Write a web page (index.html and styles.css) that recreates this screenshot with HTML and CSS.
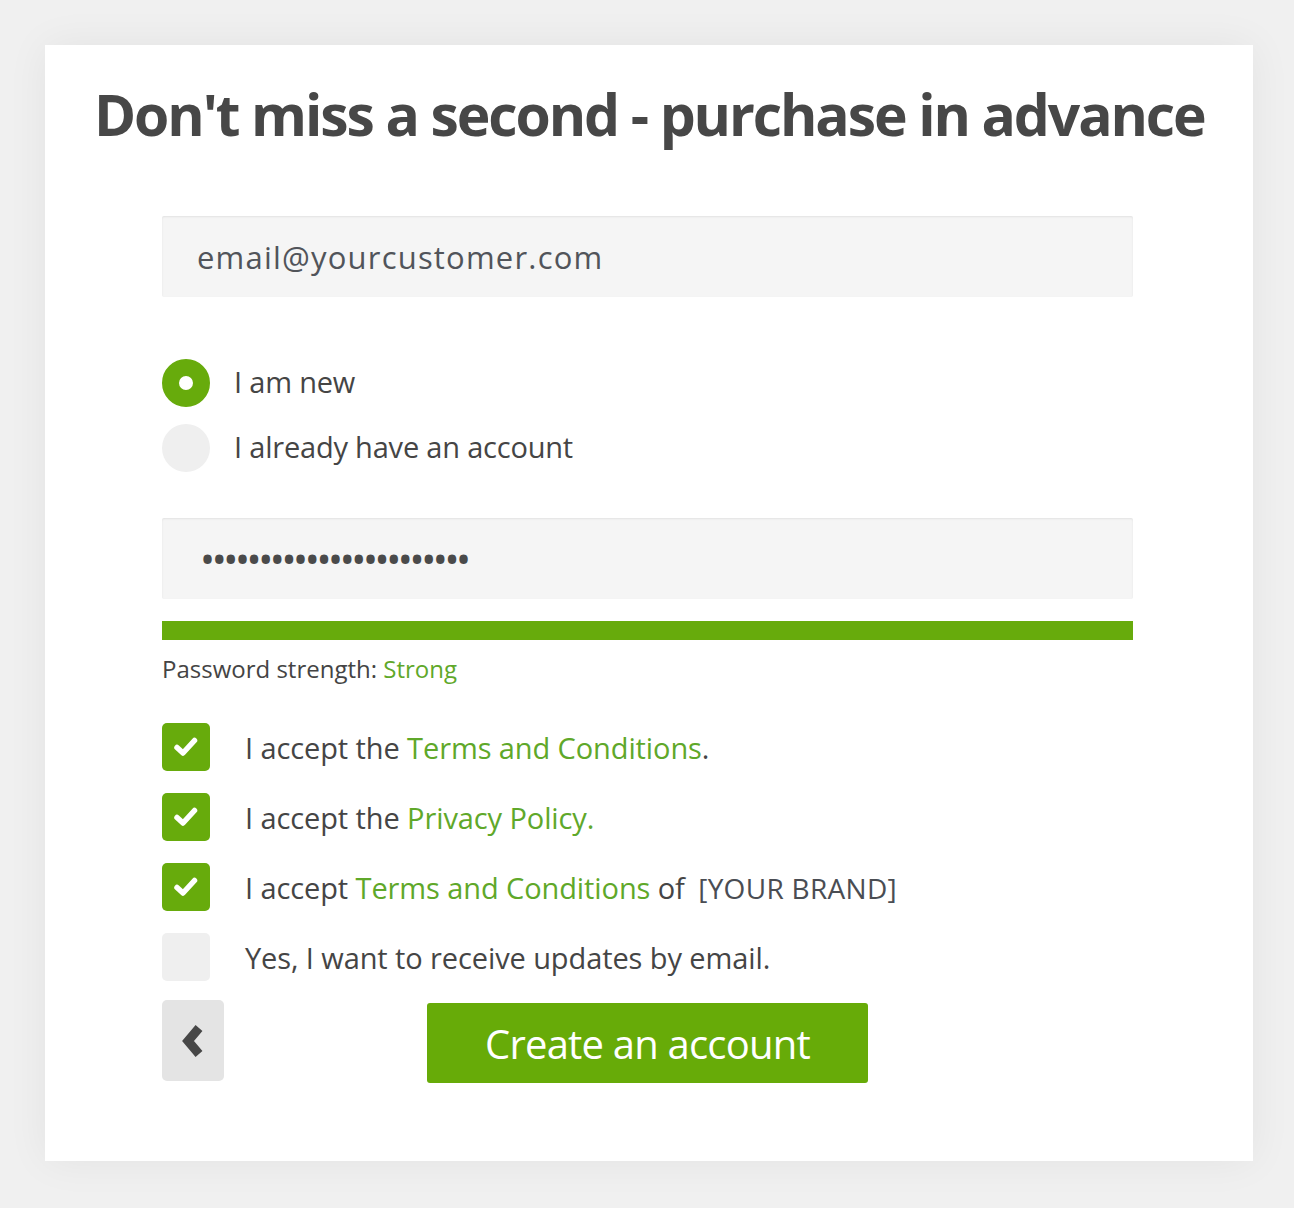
FILE: index.html
```html
<!DOCTYPE html>
<html>
<head>
<meta charset="utf-8">
<link rel="stylesheet" href="styles.css">
</head>
<body>
<div class="card">
  <h1 class="title">Don't miss a second - purchase in advance</h1>
  <div class="form">
    <div class="field email">email@yourcustomer.com</div>
    <div class="radios">
      <div class="radio-row"><span class="radio on"></span><span class="label">I am new</span></div>
      <div class="radio-row"><span class="radio"></span><span class="label">I already have an account</span></div>
    </div>
    <div class="field pass"><span class="dots">•••••••••••••••••••••••</span></div>
    <div class="strength-bar"></div>
    <div class="strength">Password strength: <span class="green">Strong</span></div>
    <div class="checks">
      <div class="check-row"><span class="box on"><svg viewBox="0 0 26 26" width="26" height="26"><path d="M4 13.5 L10 19 L21.5 6.5" fill="none" stroke="#fff" stroke-width="5.5" stroke-linecap="round" stroke-linejoin="round"/></svg></span><span class="clabel">I accept the <span class="green">Terms and Conditions</span>.</span></div>
      <div class="check-row"><span class="box on"><svg viewBox="0 0 26 26" width="26" height="26"><path d="M4 13.5 L10 19 L21.5 6.5" fill="none" stroke="#fff" stroke-width="5.5" stroke-linecap="round" stroke-linejoin="round"/></svg></span><span class="clabel">I accept the <span class="green">Privacy Policy.</span></span></div>
      <div class="check-row"><span class="box on"><svg viewBox="0 0 26 26" width="26" height="26"><path d="M4 13.5 L10 19 L21.5 6.5" fill="none" stroke="#fff" stroke-width="5.5" stroke-linecap="round" stroke-linejoin="round"/></svg></span><span class="clabel">I accept <span class="green">Terms and Conditions</span> of <span class="brand">[YOUR BRAND]</span></span></div>
      <div class="check-row"><span class="box"></span><span class="clabel">Yes, I want to receive updates by email.</span></div>
    </div>
    <div class="actions">
      <button class="back"><svg viewBox="0 0 28 40" width="28" height="40"><path d="M20 7 L9 20 L20 33" fill="none" stroke="#474747" stroke-width="9" stroke-linejoin="miter" stroke-miterlimit="3"/></svg></button>
      <button class="create">Create an account</button>
    </div>
  </div>
</div>
</body>
</html>
```
FILE: styles.css
```css
html, body {
  margin: 0;
  padding: 0;
}
body {
  background: #f0f0f0;
  padding: 45px 41px 47px 45px;
  font-family: "Open Sans", "Liberation Sans", sans-serif;
  color: #4a4a4a;
}
.card {
  background: #fff;
  width: 1208px;
  height: 1116px;
  box-sizing: border-box;
  box-shadow: 0 0 40px rgba(0,0,0,0.06);
  padding-top: 30px;
}
.title {
  margin: 0;
  font-size: 57px;
  font-weight: 700;
  letter-spacing: -2.1px;
  color: #474747;
  line-height: 78px;
  padding-left: 49px;
  white-space: nowrap;
}
.form {
  margin-left: 117px;
  width: 971px;
  padding-top: 63px;
}
.field {
  height: 81px;
  background: #f5f5f5;
  box-shadow: inset 0 1px 2px rgba(0,0,0,0.08);
  border-radius: 2px;
  display: flex;
  align-items: center;
  box-sizing: border-box;
}
.email {
  padding-left: 35px;
  font-size: 31px;
  letter-spacing: 1.2px;
  color: #51545a;
}
.radios {
  margin-top: 62px;
  display: flex;
  flex-direction: column;
  gap: 17px;
}
.radio-row {
  display: flex;
  align-items: center;
  height: 48px;
}
.radio {
  width: 48px;
  height: 48px;
  border-radius: 50%;
  background: #efefef;
  box-sizing: border-box;
  margin-right: 24px;
  flex: none;
}
.radio.on {
  background: #fff;
  border: 17px solid #67ab0c;
}
.label {
  font-size: 29px;
  letter-spacing: -0.2px;
  color: #454545;
  line-height: 1;
  margin-top: -4px;
}
.pass {
  margin-top: 46px;
  padding-left: 38px;
}
.dots {
  font-size: 40px;
  line-height: 1;
  letter-spacing: -3.4px;
  color: #4a4a4a;
}
.strength-bar {
  margin-top: 22px;
  height: 19px;
  background: #67ab0c;
}
.strength {
  margin-top: 12px;
  font-size: 24px;
  letter-spacing: 0;
  color: #444;
}
.green {
  color: #5fa82a;
}
.checks {
  margin-top: 38px;
  display: flex;
  flex-direction: column;
  gap: 22px;
}
.check-row {
  display: flex;
  align-items: center;
  height: 48px;
}
.box {
  width: 48px;
  height: 48px;
  border-radius: 5px;
  background: #efefef;
  margin-right: 35px;
  flex: none;
  display: flex;
  align-items: center;
  justify-content: center;
}
.box.on {
  background: #67ab0c;
}
.clabel {
  font-size: 29px;
  letter-spacing: -0.1px;
  color: #454545;
  line-height: 1;
}
.brand {
  font-size: 28px;
  letter-spacing: 0.3px;
  color: #4a4d53;
  margin-left: 6px;
}
.actions {
  margin-top: 19px;
  display: flex;
  align-items: flex-start;
}
.back {
  width: 62px;
  height: 81px;
  border: none;
  border-radius: 5px;
  background: #e4e4e4;
  display: flex;
  align-items: center;
  justify-content: center;
  padding: 0;
}
.create {
  margin-left: 203px;
  margin-top: 3px;
  width: 441px;
  height: 80px;
  border: none;
  border-radius: 3px;
  background: #67ab08;
  color: #fff;
  font-family: "Open Sans", "Liberation Sans", sans-serif;
  font-size: 40px;
  letter-spacing: -0.8px;
  padding: 0;
}
```
